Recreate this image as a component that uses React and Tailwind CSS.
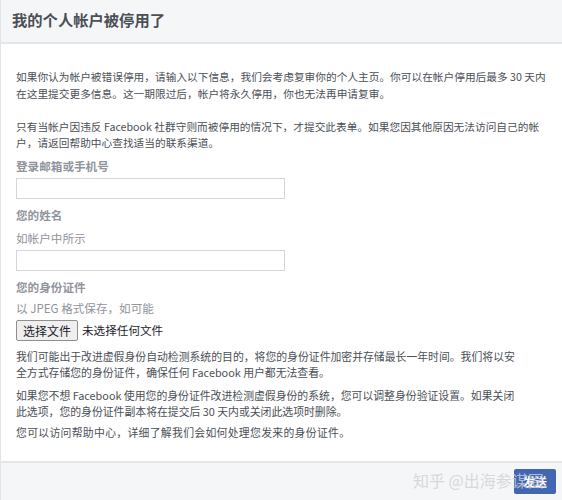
import React from "react";

const font = { fontFamily: '"Noto Sans CJK SC", "Noto Sans", sans-serif' };

export default function App() {
  return (
    <div
      className="relative w-[562px] h-[500px] bg-white overflow-hidden border-l border-[#e3e4e6] flex flex-col text-[#4b4f56]"
      style={font}
    >
      <div className="h-[44px] shrink-0 bg-[#f5f6f7] border-b-2 border-[#e5e6e8] flex items-center pl-[11px]">
        <h1 className="text-[15.3px] font-bold text-[#4b4f56] leading-none -mt-[2px]">我的个人帐户被停用了</h1>
      </div>

      <div className="flex-1 pl-[15px] pr-[10px] pt-[24px] text-[10.7px]">
        <p className="leading-[17px]">
          如果你认为帐户被错误停用，请输入以下信息，我们会考虑复审你的个人主页。你可以在帐户停用后最多 30 天内
          <br />
          在这里提交更多信息。这一期限过后，帐户将永久停用，你也无法再申请复审。
        </p>
        <p className="leading-[16px] mt-[17px]">
          只有当帐户因违反 Facebook 社群守则而被停用的情况下，才提交此表单。如果您因其他原因无法访问自己的帐
          <br />
          户，请返回帮助中心查找适当的联系渠道。
        </p>

        <div className="mt-[7px] leading-[17px] font-bold text-[#90949c] text-[11.6px]">登录邮箱或手机号</div>
        <div className="mt-[3px] w-[269px] h-[21px] border border-[#d3d6da] bg-white" />

        <div className="mt-[8px] leading-[17px] font-bold text-[#90949c] text-[11.6px]">您的姓名</div>
        <div className="mt-[6px] leading-[17px] text-[#90949c] text-[11.6px]">如帐户中所示</div>
        <div className="mt-[3px] w-[269px] h-[21px] border border-[#d3d6da] bg-white" />

        <div className="mt-[8px] leading-[17px] font-bold text-[#90949c] text-[11.6px]">您的身份证件</div>
        <div className="mt-[4px] leading-[17px] text-[#90949c] text-[11.6px]">以 JPEG 格式保存，如可能</div>
        <div className="mt-[3px] flex items-center gap-[4px]">
          <span className="h-[21px] px-[6px] flex items-center border border-[#8f8f8f] rounded-[2px] bg-[#efefef] text-[12px] text-[#1d2129]">
            选择文件
          </span>
          <span className="text-[11.6px] text-[#1d2129]">未选择任何文件</span>
        </div>

        <div className="text-[10.85px]">
          <p className="leading-[16px] mt-[7px]">
            我们可能出于改进虚假身份自动检测系统的目的，将您的身份证件加密并存储最长一年时间。我们将以安
            <br />
            全方式存储您的身份证件，确保任何 Facebook 用户都无法查看。
          </p>
          <p className="leading-[16px] mt-[7px]">
            如果您不想 Facebook 使用您的身份证件改进检测虚假身份的系统，您可以调整身份验证设置。如果关闭
            <br />
            此选项，您的身份证件副本将在提交后 30 天内或关闭此选项时删除。
          </p>
          <p className="leading-[16px] mt-[5px] tracking-[0.3px]">您可以访问帮助中心，详细了解我们会如何处理您发来的身份证件。</p>
        </div>
      </div>

      <div className="h-[39px] shrink-0 bg-[#f5f6f7] border-t-2 border-[#e5e6e8] flex items-center justify-end pr-[6px]">
        <button className="w-[42px] h-[25px] bg-[#4267b2] rounded-[2px] text-white text-[12px] font-bold flex items-center justify-center">
          发送
        </button>
      </div>

      <div className="absolute left-[412px] top-[470px] text-[16px] leading-[20px] text-[#cfd0d2]/80 whitespace-nowrap pointer-events-none">
        知乎 @出海参谋圈
      </div>
    </div>
  );
}
